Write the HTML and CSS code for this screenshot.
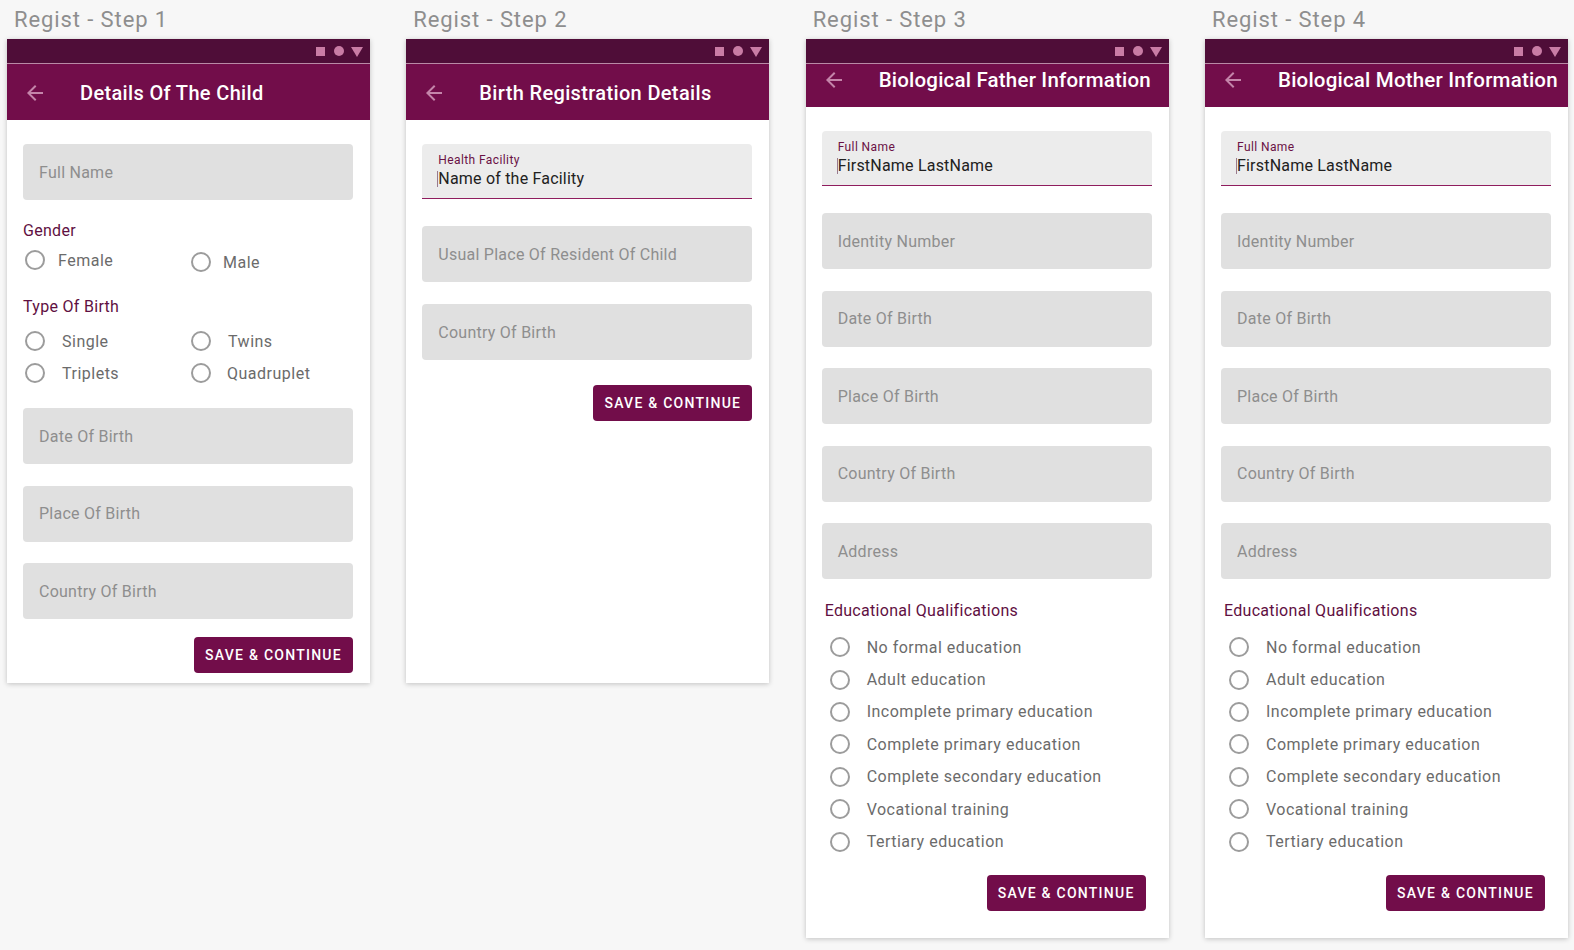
FILE: index.html
```html
<!DOCTYPE html>
<html lang="en">
<head>
<meta charset="utf-8">
<title>Regist Steps</title>
<link rel="stylesheet" href="styles.css">
</head>
<body>
<main class="board">

  <!-- STEP 1 -->
  <section class="screen">
    <h2 class="screen-title">Regist - Step 1</h2>
    <div class="phone phone-short">
      <div class="statusbar"><span class="sb-square"></span><span class="sb-circle"></span><span class="sb-tri"></span></div>
      <header class="appbar appbar-tall">
        <svg class="back" viewBox="0 0 24 24"><path d="M20 11H7.830l5.590-5.590L12 4l-8 8 8 8 1.410-1.410L7.830 13H20v-2z"/></svg>
        <h1 class="appbar-title">Details Of The Child</h1>
      </header>
      <div class="content content-1">
        <div class="field">Full Name</div>
        <div class="group-label gender-label">Gender</div>
        <div class="radio-grid gender-grid">
          <div class="radio radio-g13"><span class="circle"></span><span class="radio-text">Female</span></div>
          <div class="radio radio-g12 radio-low"><span class="circle"></span><span class="radio-text">Male</span></div>
        </div>
        <div class="group-label birth-label">Type Of Birth</div>
        <div class="radio-grid birth-grid">
          <div class="radio"><span class="circle"></span><span class="radio-text">Single</span></div>
          <div class="radio"><span class="circle"></span><span class="radio-text">Twins</span></div>
          <div class="radio"><span class="circle"></span><span class="radio-text">Triplets</span></div>
          <div class="radio radio-g16"><span class="circle"></span><span class="radio-text">Quadruplet</span></div>
        </div>
        <div class="field field-after-radios">Date Of Birth</div>
        <div class="field field-gap215">Place Of Birth</div>
        <div class="field field-gap215">Country Of Birth</div>
        <button class="btn btn-1">SAVE &amp; CONTINUE</button>
      </div>
    </div>
  </section>

  <!-- STEP 2 -->
  <section class="screen">
    <h2 class="screen-title">Regist - Step 2</h2>
    <div class="phone phone-short">
      <div class="statusbar"><span class="sb-square"></span><span class="sb-circle"></span><span class="sb-tri"></span></div>
      <header class="appbar appbar-tall">
        <svg class="back" viewBox="0 0 24 24"><path d="M20 11H7.830l5.590-5.590L12 4l-8 8 8 8 1.410-1.410L7.830 13H20v-2z"/></svg>
        <h1 class="appbar-title">Birth Registration Details</h1>
      </header>
      <div class="content content-2">
        <div class="field field-filled">
          <span class="filled-label">Health Facility</span>
          <span class="filled-value">Name of the Facility</span>
        </div>
        <div class="field field-gap27">Usual Place Of Resident Of Child</div>
        <div class="field field-gap22">Country Of Birth</div>
        <button class="btn btn-2">SAVE &amp; CONTINUE</button>
      </div>
    </div>
  </section>

  <!-- STEP 3 -->
  <section class="screen">
    <h2 class="screen-title">Regist - Step 3</h2>
    <div class="phone phone-long">
      <div class="statusbar"><span class="sb-square"></span><span class="sb-circle"></span><span class="sb-tri"></span></div>
      <header class="appbar appbar-short">
        <svg class="back" viewBox="0 0 24 24"><path d="M20 11H7.830l5.590-5.590L12 4l-8 8 8 8 1.410-1.410L7.830 13H20v-2z"/></svg>
        <h1 class="appbar-title appbar-title-lg">Biological Father Information</h1>
      </header>
      <div class="content content-3">
        <div class="field field-filled">
          <span class="filled-label">Full Name</span>
          <span class="filled-value">FirstName LastName</span>
        </div>
        <div class="field field-gap27">Identity Number</div>
        <div class="field field-gap215">Date Of Birth</div>
        <div class="field field-gap215">Place Of Birth</div>
        <div class="field field-gap215">Country Of Birth</div>
        <div class="field field-gap215">Address</div>
        <div class="group-label edu-label">Educational Qualifications</div>
        <div class="edu-list">
          <div class="radio edu-row"><span class="circle"></span><span class="radio-text">No formal education</span></div>
          <div class="radio edu-row"><span class="circle"></span><span class="radio-text">Adult education</span></div>
          <div class="radio edu-row"><span class="circle"></span><span class="radio-text">Incomplete primary education</span></div>
          <div class="radio edu-row"><span class="circle"></span><span class="radio-text">Complete primary education</span></div>
          <div class="radio edu-row"><span class="circle"></span><span class="radio-text">Complete secondary education</span></div>
          <div class="radio edu-row"><span class="circle"></span><span class="radio-text">Vocational training</span></div>
          <div class="radio edu-row"><span class="circle"></span><span class="radio-text">Tertiary education</span></div>
        </div>
        <button class="btn btn-3">SAVE &amp; CONTINUE</button>
      </div>
    </div>
  </section>

  <!-- STEP 4 -->
  <section class="screen">
    <h2 class="screen-title">Regist - Step 4</h2>
    <div class="phone phone-long">
      <div class="statusbar"><span class="sb-square"></span><span class="sb-circle"></span><span class="sb-tri"></span></div>
      <header class="appbar appbar-short">
        <svg class="back" viewBox="0 0 24 24"><path d="M20 11H7.830l5.590-5.590L12 4l-8 8 8 8 1.410-1.410L7.830 13H20v-2z"/></svg>
        <h1 class="appbar-title appbar-title-lg">Biological Mother Information</h1>
      </header>
      <div class="content content-3">
        <div class="field field-filled">
          <span class="filled-label">Full Name</span>
          <span class="filled-value">FirstName LastName</span>
        </div>
        <div class="field field-gap27">Identity Number</div>
        <div class="field field-gap215">Date Of Birth</div>
        <div class="field field-gap215">Place Of Birth</div>
        <div class="field field-gap215">Country Of Birth</div>
        <div class="field field-gap215">Address</div>
        <div class="group-label edu-label">Educational Qualifications</div>
        <div class="edu-list">
          <div class="radio edu-row"><span class="circle"></span><span class="radio-text">No formal education</span></div>
          <div class="radio edu-row"><span class="circle"></span><span class="radio-text">Adult education</span></div>
          <div class="radio edu-row"><span class="circle"></span><span class="radio-text">Incomplete primary education</span></div>
          <div class="radio edu-row"><span class="circle"></span><span class="radio-text">Complete primary education</span></div>
          <div class="radio edu-row"><span class="circle"></span><span class="radio-text">Complete secondary education</span></div>
          <div class="radio edu-row"><span class="circle"></span><span class="radio-text">Vocational training</span></div>
          <div class="radio edu-row"><span class="circle"></span><span class="radio-text">Tertiary education</span></div>
        </div>
        <button class="btn btn-3">SAVE &amp; CONTINUE</button>
      </div>
    </div>
  </section>

</main>
</body>
</html>
```

FILE: styles.css
```css
html, body {
  margin: 0;
  padding: 0;
}

body {
  background: #f7f7f7;
  font-family: Roboto, "Noto Sans", "Liberation Sans", sans-serif;
  width: 1574px;
  height: 950px;
  overflow: hidden;
}

.board {
  display: flex;
  align-items: flex-start;
  gap: 36.33px;
  padding-left: 7px;
}

.screen {
  width: 363px;
  flex: none;
}

.screen-title {
  margin: 0;
  height: 39px;
  box-sizing: border-box;
  padding: 8px 0 0 7px;
  font-size: 22px;
  line-height: 24px;
  font-weight: 400;
  color: #8e8e8e;
  letter-spacing: 0.9px;
}

.phone {
  background: #ffffff;
  box-shadow: 0 1px 5px rgba(0, 0, 0, 0.22);
  display: flex;
  flex-direction: column;
  overflow: hidden;
}

.phone-short { height: 644px; }
.phone-long  { height: 899px; }

/* status bar */
.statusbar {
  height: 24px;
  flex: none;
  background: #4f0d38;
  border-bottom: 1px solid #b98aa6;
  display: flex;
  align-items: center;
  justify-content: flex-end;
  padding-right: 7px;
}

.sb-square {
  width: 9px;
  height: 9px;
  background: #c97ca5;
  margin-right: 9px;
}

.sb-circle {
  width: 10px;
  height: 10px;
  border-radius: 50%;
  background: #c97ca5;
  margin-right: 7px;
}

.sb-tri {
  width: 0;
  height: 0;
  border-left: 6px solid transparent;
  border-right: 6px solid transparent;
  border-top: 10px solid #c97ca5;
  margin-top: 1px;
}

/* app bar */
.appbar {
  flex: none;
  background: #720d4a;
  display: flex;
  align-items: center;
  padding-left: 16px;
  box-sizing: border-box;
}

.appbar-tall {
  height: 56px;
  padding-top: 2px;
}

.appbar-short {
  height: 43px;
  padding-bottom: 12px;
}

.back {
  width: 24px;
  height: 24px;
  flex: none;
  fill: #c485aa;
  margin-right: 33px;
}

.appbar-title {
  margin: 0;
  font-size: 20px;
  font-weight: 500;
  color: #ffffff;
  letter-spacing: 0.35px;
  white-space: nowrap;
}

.appbar-title-lg {
  font-size: 20.5px;
  letter-spacing: 0.2px;
}

/* content */
.content {
  display: flex;
  flex-direction: column;
  padding: 24px 17px 0 16px;
}

.field {
  height: 56px;
  flex: none;
  box-sizing: border-box;
  background: #e0e0e0;
  border-radius: 4px;
  display: flex;
  align-items: center;
  padding-left: 16px;
  font-size: 16px;
  color: #8e8e8e;
  letter-spacing: 0.25px;
}

.field-filled {
  height: 55px;
  background: #ececec;
  border-radius: 4px 4px 0 0;
  border-bottom: 1px solid #8f1d5e;
  flex-direction: column;
  align-items: flex-start;
  justify-content: flex-start;
  padding-top: 8px;
}

.filled-label {
  font-size: 12px;
  line-height: 16px;
  color: #6a1145;
  letter-spacing: 0.4px;
}

.filled-value {
  position: relative;
  margin-top: 1px;
  font-size: 16px;
  line-height: 20px;
  color: #212121;
  letter-spacing: 0.2px;
}

.filled-value::before {
  content: "";
  position: absolute;
  left: -1px;
  top: 2px;
  width: 1px;
  height: 16px;
  background: #9a7a8e;
}

.field-gap22 { margin-top: 22px; }
.field-gap27 { margin-top: 27px; }
.field-gap215 { margin-top: 21.5px; }
.field-after-radios { margin-top: 23px; }

.group-label {
  font-size: 16px;
  line-height: 20px;
  color: #5f1042;
  letter-spacing: 0.3px;
}

.gender-label { margin-top: 21px; }
.birth-label  { margin-top: 23px; }
.edu-label    { margin-top: 22px; padding-left: 3px; }

.radio-grid {
  display: grid;
  grid-template-columns: 166px 1fr;
  padding-left: 2px;
}

.gender-grid { margin-top: 7px; }
.birth-grid  { margin-top: 12px; row-gap: 8px; }

.radio {
  display: flex;
  align-items: center;
  height: 24px;
  gap: 17px;
}

.radio-g13 { gap: 13px; }
.radio-g12 { gap: 12px; }
.radio-g16 { gap: 16px; }
.radio-low { margin-top: 2px; }

.circle {
  width: 20px;
  height: 20px;
  flex: none;
  box-sizing: border-box;
  border: 2px solid #9c9c9c;
  border-radius: 50%;
}

.radio-text {
  font-size: 16px;
  color: #6b6b6b;
  letter-spacing: 0.5px;
  white-space: nowrap;
}

.edu-list {
  display: flex;
  flex-direction: column;
  margin-top: 10px;
  padding-left: 8px;
}

.edu-row {
  height: 32.4px;
}

/* button */
.btn {
  align-self: flex-end;
  width: 159px;
  height: 36px;
  border: none;
  border-radius: 4px;
  background: #720d4a;
  color: #ffffff;
  font-family: Roboto, "Noto Sans", "Liberation Sans", sans-serif;
  font-size: 14px;
  font-weight: 500;
  letter-spacing: 1.25px;
  padding: 0;
  cursor: pointer;
}

.btn-1 { margin-top: 18px; }
.btn-2 { margin-top: 25px; }
.btn-3 { margin-top: 17px; margin-right: 6px; }
```
